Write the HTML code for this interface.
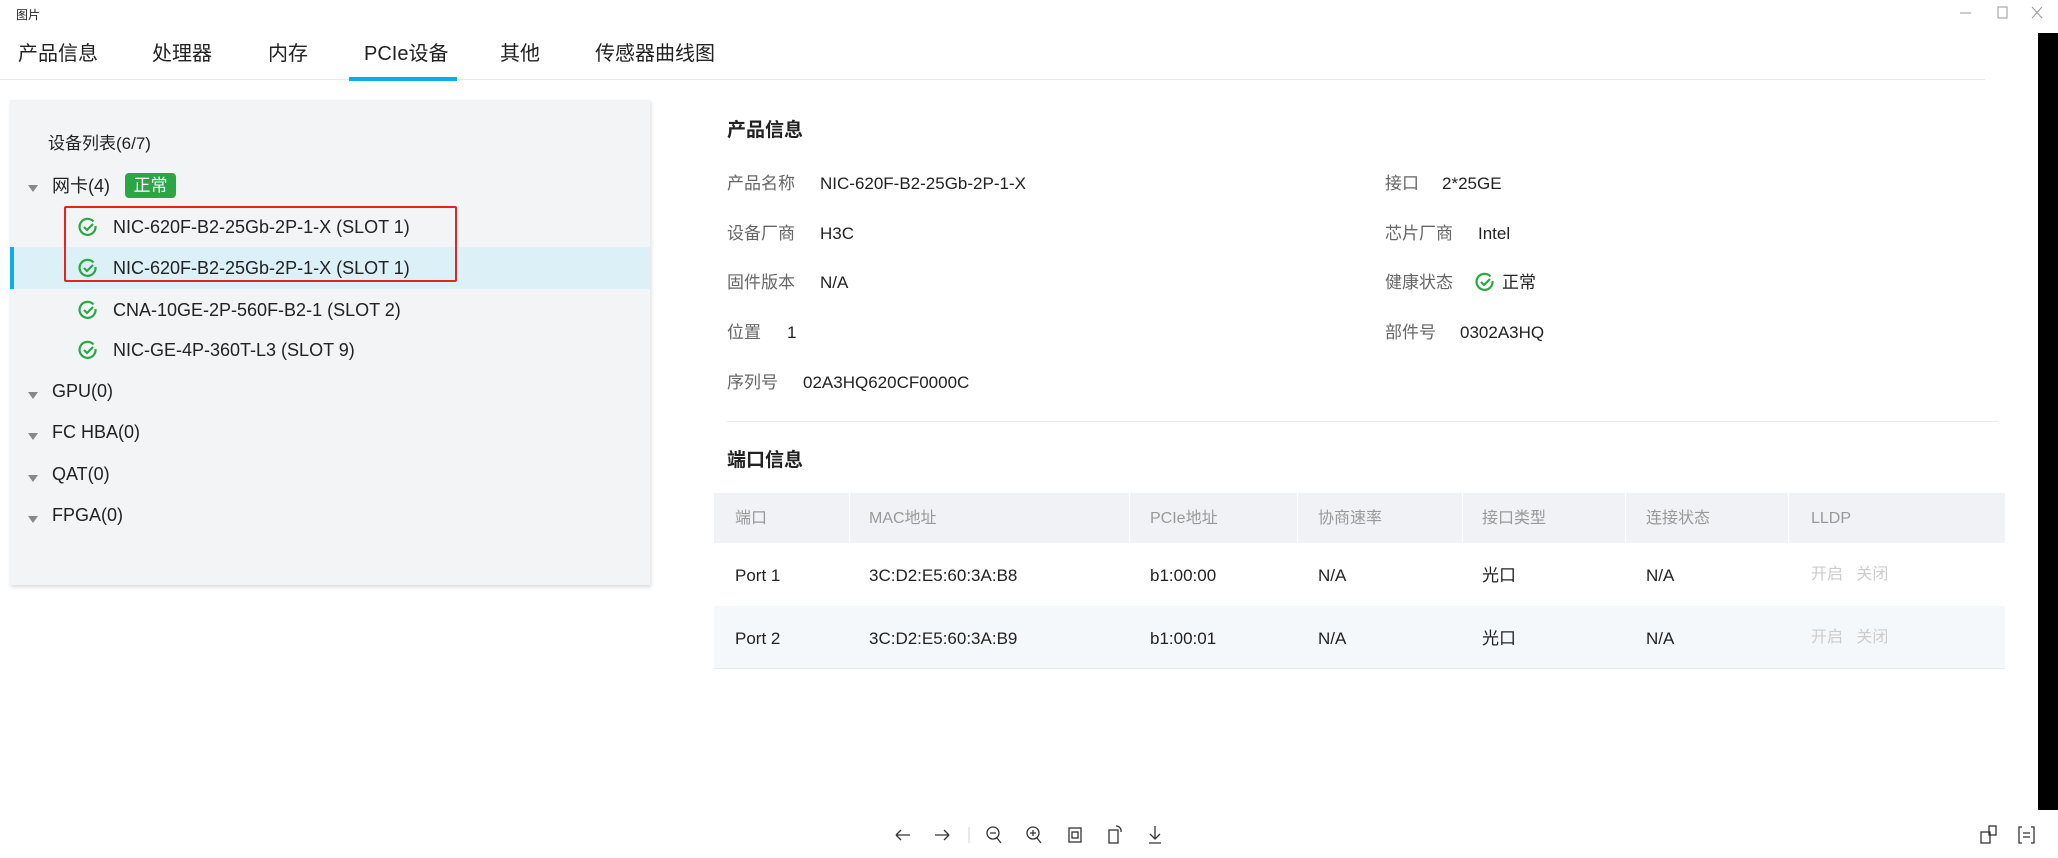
<!DOCTYPE html>
<html><head><meta charset="utf-8"><style>
*{margin:0;padding:0;box-sizing:border-box}
body{width:2058px;height:858px;background:#fff;position:relative;overflow:hidden;font-family:"Liberation Sans","Noto Sans CJK SC",sans-serif;color:#222}
.a{position:absolute;white-space:nowrap;line-height:1}
.tab{font-size:20px;top:44px;color:#222}
.lbl{font-size:17px;color:#666}
.val{font-size:17px;color:#222}
.tri{position:absolute;width:0;height:0;border-left:5px solid transparent;border-right:5px solid transparent;border-top:7px solid #888}
.th{font-size:16px;color:#999}
.td{font-size:17px;color:#222}
</style></head><body>
<div class="a" style="left:16px;top:9px;font-size:12px">图片</div>
<svg class="a" style="left:1958px;top:4px" width="90" height="18"><line x1="2" y1="9" x2="13" y2="9" stroke="#999" stroke-width="1"/><rect x="40" y="3" width="9" height="11" fill="none" stroke="#999"/><path d="M74 3 L84 14 M84 3 L74 14" stroke="#999"/></svg>
<div class="a" style="left:2038px;top:33px;width:20px;height:777px;background:#000"></div>

<div class="a tab" style="left:18px">产品信息</div>
<div class="a tab" style="left:152px">处理器</div>
<div class="a tab" style="left:268px">内存</div>
<div class="a tab" style="left:364px">PCIe设备</div>
<div class="a tab" style="left:500px">其他</div>
<div class="a tab" style="left:595px">传感器曲线图</div>
<div class="a" style="left:0;top:79px;width:1985px;height:1px;background:#e6e9ef"></div>
<div class="a" style="left:349px;top:77px;width:108px;height:4px;background:#0aaee8"></div>

<div class="a" style="left:10px;top:100px;width:640px;height:485px;background:#f3f4f6;box-shadow:1px 2px 4px rgba(0,0,0,.15)"></div>
<div class="a" style="left:48px;top:135px;font-size:17px">设备列表(6/7)</div>
<div class="tri" style="left:28px;top:185px"></div>
<div class="a" style="left:52px;top:177px;font-size:18px">网卡(4)</div>
<div class="a" style="left:125px;top:173px;width:51px;height:25px;background:#2aa744;border-radius:4px;color:#fff;font-size:17px;text-align:center;line-height:25px">正常</div>
<div class="a" style="left:10px;top:247px;width:640px;height:42px;background:#dcf0f7"></div>
<div class="a" style="left:10px;top:247px;width:4px;height:42px;background:#0aaee8"></div>
<div class="a" style="left:64px;top:206px;width:393px;height:76px;border:2px solid #e8231c;border-radius:2px"></div>

<svg class="a" style="left:78px;top:217px" width="20" height="150">
<g fill="none" stroke="#2aa744" stroke-width="2.2"><g id="c"><path d="M15.5 4.5 A8 8 0 1 0 17.5 9"/><path d="M6 10 L9 13 L15 7"/></g>
<use href="#c" y="41"/><use href="#c" y="83"/><use href="#c" y="123"/></g></svg>
<div class="a" style="left:113px;top:218px;font-size:18px">NIC-620F-B2-25Gb-2P-1-X (SLOT 1)</div>
<div class="a" style="left:113px;top:259px;font-size:18px">NIC-620F-B2-25Gb-2P-1-X (SLOT 1)</div>
<div class="a" style="left:113px;top:301px;font-size:18px">CNA-10GE-2P-560F-B2-1 (SLOT 2)</div>
<div class="a" style="left:113px;top:341px;font-size:18px">NIC-GE-4P-360T-L3 (SLOT 9)</div>
<div class="tri" style="left:28px;top:392px"></div><div class="a" style="left:52px;top:382px;font-size:18px">GPU(0)</div>
<div class="tri" style="left:28px;top:433px"></div><div class="a" style="left:52px;top:423px;font-size:18px">FC HBA(0)</div>
<div class="tri" style="left:28px;top:475px"></div><div class="a" style="left:52px;top:465px;font-size:18px">QAT(0)</div>
<div class="tri" style="left:28px;top:516px"></div><div class="a" style="left:52px;top:506px;font-size:18px">FPGA(0)</div>

<div class="a" style="left:727px;top:121px;font-size:19px;font-weight:bold">产品信息</div>
<div class="a lbl" style="left:727px;top:175px">产品名称</div><div class="a val" style="left:820px;top:175px">NIC-620F-B2-25Gb-2P-1-X</div>
<div class="a lbl" style="left:727px;top:225px">设备厂商</div><div class="a val" style="left:820px;top:225px">H3C</div>
<div class="a lbl" style="left:727px;top:274px">固件版本</div><div class="a val" style="left:820px;top:274px">N/A</div>
<div class="a lbl" style="left:727px;top:324px">位置</div><div class="a val" style="left:787px;top:324px">1</div>
<div class="a lbl" style="left:727px;top:374px">序列号</div><div class="a val" style="left:803px;top:374px">02A3HQ620CF0000C</div>
<div class="a lbl" style="left:1385px;top:175px">接口</div><div class="a val" style="left:1442px;top:175px">2*25GE</div>
<div class="a lbl" style="left:1385px;top:225px">芯片厂商</div><div class="a val" style="left:1478px;top:225px">Intel</div>
<div class="a lbl" style="left:1385px;top:274px">健康状态</div>
<svg class="a" style="left:1475px;top:272px" width="20" height="20"><g fill="none" stroke="#2aa744" stroke-width="2.2"><path d="M15.5 4.5 A8 8 0 1 0 17.5 9"/><path d="M6 10 L9 13 L15 7"/></g></svg>
<div class="a val" style="left:1502px;top:274px">正常</div>
<div class="a lbl" style="left:1385px;top:324px">部件号</div><div class="a val" style="left:1460px;top:324px">0302A3HQ</div>
<div class="a" style="left:727px;top:421px;width:1271px;height:1px;background:#e8eaee"></div>
<div class="a" style="left:727px;top:451px;font-size:19px;font-weight:bold">端口信息</div>

<div class="a" style="left:714px;top:493px;width:1291px;height:50px;background:#f0f2f5"></div>
<div class="a" style="left:714px;top:606px;width:1291px;height:63px;background:#f5f8fb;border-bottom:1px solid #e6e9ee"></div>
<div class="a" style="left:849px;top:493px;width:1px;height:50px;background:#fff"></div>
<div class="a" style="left:1129px;top:493px;width:1px;height:50px;background:#fff"></div>
<div class="a" style="left:1297px;top:493px;width:1px;height:50px;background:#fff"></div>
<div class="a" style="left:1462px;top:493px;width:1px;height:50px;background:#fff"></div>
<div class="a" style="left:1625px;top:493px;width:1px;height:50px;background:#fff"></div>
<div class="a" style="left:1788px;top:493px;width:1px;height:50px;background:#fff"></div>
<div class="a th" style="left:735px;top:511px">端口</div>
<div class="a th" style="left:869px;top:511px">MAC地址</div>
<div class="a th" style="left:1150px;top:511px">PCIe地址</div>
<div class="a th" style="left:1318px;top:511px">协商速率</div>
<div class="a th" style="left:1482px;top:511px">接口类型</div>
<div class="a th" style="left:1646px;top:511px">连接状态</div>
<div class="a th" style="left:1811px;top:511px">LLDP</div>
<div class="a td" style="left:735px;top:567px">Port 1</div><div class="a td" style="left:869px;top:567px">3C:D2:E5:60:3A:B8</div><div class="a td" style="left:1150px;top:567px">b1:00:00</div><div class="a td" style="left:1318px;top:567px">N/A</div><div class="a td" style="left:1482px;top:567px">光口</div><div class="a td" style="left:1646px;top:567px">N/A</div><div class="a" style="left:1811px;top:567px;font-size:16px;color:#ccc">开启&nbsp;&nbsp;&nbsp;关闭</div>
<div class="a td" style="left:735px;top:630px">Port 2</div><div class="a td" style="left:869px;top:630px">3C:D2:E5:60:3A:B9</div><div class="a td" style="left:1150px;top:630px">b1:00:01</div><div class="a td" style="left:1318px;top:630px">N/A</div><div class="a td" style="left:1482px;top:630px">光口</div><div class="a td" style="left:1646px;top:630px">N/A</div><div class="a" style="left:1811px;top:630px;font-size:16px;color:#ccc">开启&nbsp;&nbsp;&nbsp;关闭</div>

<svg class="a" style="left:890px;top:823px" width="1160" height="26" fill="none" stroke="#333" stroke-width="1.3">
<path d="M6 12 H20 M6 12 L11 7 M6 12 L11 17"/>
<path d="M45 12 H59 M59 12 L54 7 M59 12 L54 17"/>
<line x1="79" y1="4" x2="79" y2="20" stroke="#ddd"/>
<circle cx="103" cy="10" r="6"/><path d="M107 15 L111 20 M100 10 H106"/>
<circle cx="143" cy="10" r="6"/><path d="M147 15 L151 20 M140 10 H146 M143 7 V13"/>
<rect x="179" y="5" width="12" height="14"/><rect x="182" y="9" width="6" height="6"/>
<rect x="219" y="7" width="9" height="13"/><path d="M226 3 A5 5 0 0 1 231 9"/>
<path d="M265 3 V16 M260 11 L265 16 L270 11 M259 20 H271"/>
<rect x="1091" y="9" width="9" height="11"/><rect x="1099" y="3" width="7" height="9"/>
<path d="M1132 4 H1129 V20 H1132 M1141 4 H1144 V20 H1141 M1133 10 H1140 M1133 14 H1140"/>
</svg>
</body></html>
